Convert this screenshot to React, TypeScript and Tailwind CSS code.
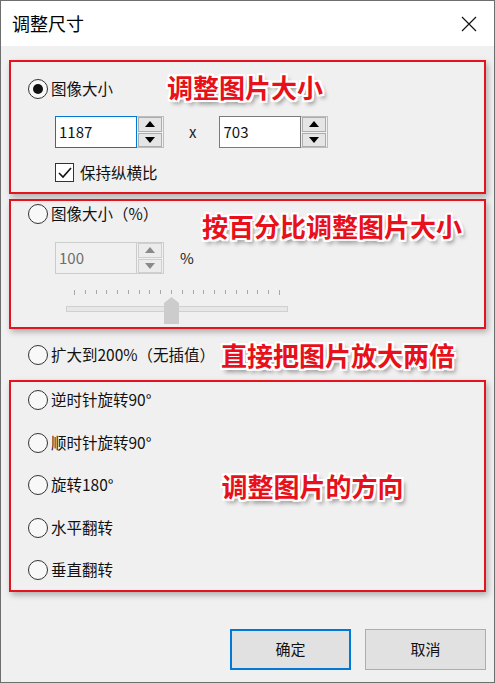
import type { ReactNode } from "react";

const font = "font-['Noto_Sans_CJK_SC','Noto_Sans',sans-serif]";
const note =
  "font-bold text-[26px] leading-none text-[#e8101a] [text-shadow:2px_0_0_#fff,-2px_0_0_#fff,0_2px_0_#fff,0_-2px_0_#fff,2px_2px_0_#fff,-2px_-2px_0_#fff,2px_-2px_0_#fff,-2px_2px_0_#fff,3px_4px_4px_rgba(0,0,0,0.45)]";
const redBox = "border-2 border-[#e5131d] shadow-[2px_3px_6px_rgba(0,0,0,0.28)]";

function Radio({ checked, label }: { checked?: boolean; label: string }) {
  return (
    <div className="flex items-center gap-[3px]">
      <span className="flex h-[20px] w-[20px] items-center justify-center rounded-full border border-[#333] bg-[#f8f8f8]">
        {checked && <span className="h-[10px] w-[10px] rounded-full bg-[#111]" />}
      </span>
      <span className="text-[15.5px] leading-none text-[#111]">{label}</span>
    </div>
  );
}

function Arrow({ up, disabled }: { up?: boolean; disabled?: boolean }) {
  return (
    <span
      className={`flex h-[15px] w-[24px] items-center justify-center border ${
        disabled ? "border-[#cfcfcf] bg-[#ececec]" : "border-[#adadad] bg-[#e5e5e5]"
      }`}
    >
      <svg width="10" height="6" viewBox="0 0 10 6">
        <path d={up ? "M0 6 L5 0 L10 6 Z" : "M0 0 L5 6 L10 0 Z"} fill={disabled ? "#8a8a8a" : "#000"} />
      </svg>
    </span>
  );
}

function Spin({ value, focused, disabled }: { value: string; focused?: boolean; disabled?: boolean }) {
  const border = disabled ? "border-[#cccccc] bg-[#f0f0f0] text-[#6d6d6d]" : focused ? "border-[#0078d7] bg-white text-[#111]" : "border-[#7a7a7a] bg-white text-[#111]";
  return (
    <div className="flex h-[32px] items-stretch">
      <div className={`flex w-[82px] items-center border pl-[3px] text-[15px] ${border}`}>{value}</div>
      <div className={`flex flex-col justify-center gap-[1px] border-y border-r px-[1px] ${disabled ? "border-[#cccccc]" : "border-[#bdbdbd]"}`}>
        <Arrow up disabled={disabled} />
        <Arrow disabled={disabled} />
      </div>
    </div>
  );
}

function Box({ className, children }: { className: string; children: ReactNode }) {
  return <div className={`${redBox} ${className}`}>{children}</div>;
}

export default function App() {
  const ticks = Array.from({ length: 20 }, (_, i) => i);
  return (
    <div className={`${font} flex h-[683px] w-[495px] flex-col border border-[#6e6e6e] bg-[#f0f0f0]`}>
      <div className="flex h-[45px] shrink-0 items-center justify-between bg-white pl-[11px] pr-[17px]">
        <span className="text-[18px] text-black">调整尺寸</span>
        <svg width="16" height="16" viewBox="0 0 16 16">
          <path d="M1 1 L15 15 M15 1 L1 15" stroke="#111" strokeWidth="1.2" />
        </svg>
      </div>

      <div className="flex flex-1 flex-col px-[8px] pt-[14px]">
        <Box className="h-[134px] px-[17px]">
          <div className="flex h-[54px] items-center gap-[54px]">
            <Radio checked label="图像大小" />
            <span className={`${note} -mt-[4px]`}>调整图片大小</span>
          </div>
          <div className="flex items-center pl-[27px]">
            <Spin value="1187" focused />
            <span className="ml-[25px] mr-[23px] text-[15px] text-[#222]">x</span>
            <Spin value="703" />
          </div>
          <div className="mt-[15px] flex items-center gap-[6px] pl-[27px]">
            <span className="flex h-[19px] w-[19px] items-center justify-center border border-[#333] bg-white">
              <svg width="14" height="12" viewBox="0 0 14 12">
                <path d="M1 6 L5 10 L13 1" stroke="#111" strokeWidth="1.6" fill="none" />
              </svg>
            </span>
            <span className="text-[15.5px] leading-none text-[#111]">保持纵横比</span>
          </div>
        </Box>

        <Box className="mt-[5px] h-[130px] px-[17px]">
          <div className="flex h-[26px] items-center">
            <Radio label="图像大小（%）" />
          </div>
          <div className="ml-[174px] -mt-[14px] h-[30px]">
            <span className={note}>按百分比调整图片大小</span>
          </div>
          <div className="-mt-[1px] flex items-center pl-[27px]">
            <Spin value="100" disabled />
            <span className="ml-[16px] text-[15px] text-[#222]">%</span>
          </div>
          <div className="relative ml-[38px] mt-[16px] h-[34px] w-[222px]">
            <div className="flex justify-between px-[8px]">
              {ticks.map((t) => (
                <span key={t} className={`w-px bg-[#a8a8a8] ${t === 0 || t === 19 ? "h-[5px]" : "h-[4px]"}`} />
              ))}
            </div>
            <div className="mt-[11px] h-[6px] w-full border border-[#d0d0d0] bg-[#e7e7e7]" />
            <svg className="absolute left-[98px] top-[7px]" width="15" height="27" viewBox="0 0 15 27">
              <path d="M0 6 L7.5 0 L15 6 L15 27 L0 27 Z" fill="#cccccc" />
            </svg>
          </div>
        </Box>

        <div className="flex h-[51px] items-center gap-[6px] pl-[19px]">
          <Radio label="扩大到200%（无插值）" />
          <span className={note}>直接把图片放大两倍</span>
        </div>

        <Box className="flex h-[212px] items-stretch px-[17px]">
          <div className="flex flex-col justify-between pb-[10px] pt-[8px]">
            <Radio label="逆时针旋转90°" />
            <Radio label="顺时针旋转90°" />
            <Radio label="旋转180°" />
            <Radio label="水平翻转" />
            <Radio label="垂直翻转" />
          </div>
          <div className="flex flex-1 items-center pl-[70px]">
            <span className={note}>调整图片的方向</span>
          </div>
        </Box>

        <div className="mt-[37px] flex justify-end gap-[14px]">
          <button className="h-[41px] w-[121px] border-2 border-[#0078d7] bg-[#e1e1e1] text-[15px] text-[#111]">确定</button>
          <button className="h-[41px] w-[121px] border border-[#adadad] bg-[#e1e1e1] text-[15px] text-[#111]">取消</button>
        </div>
      </div>
    </div>
  );
}
